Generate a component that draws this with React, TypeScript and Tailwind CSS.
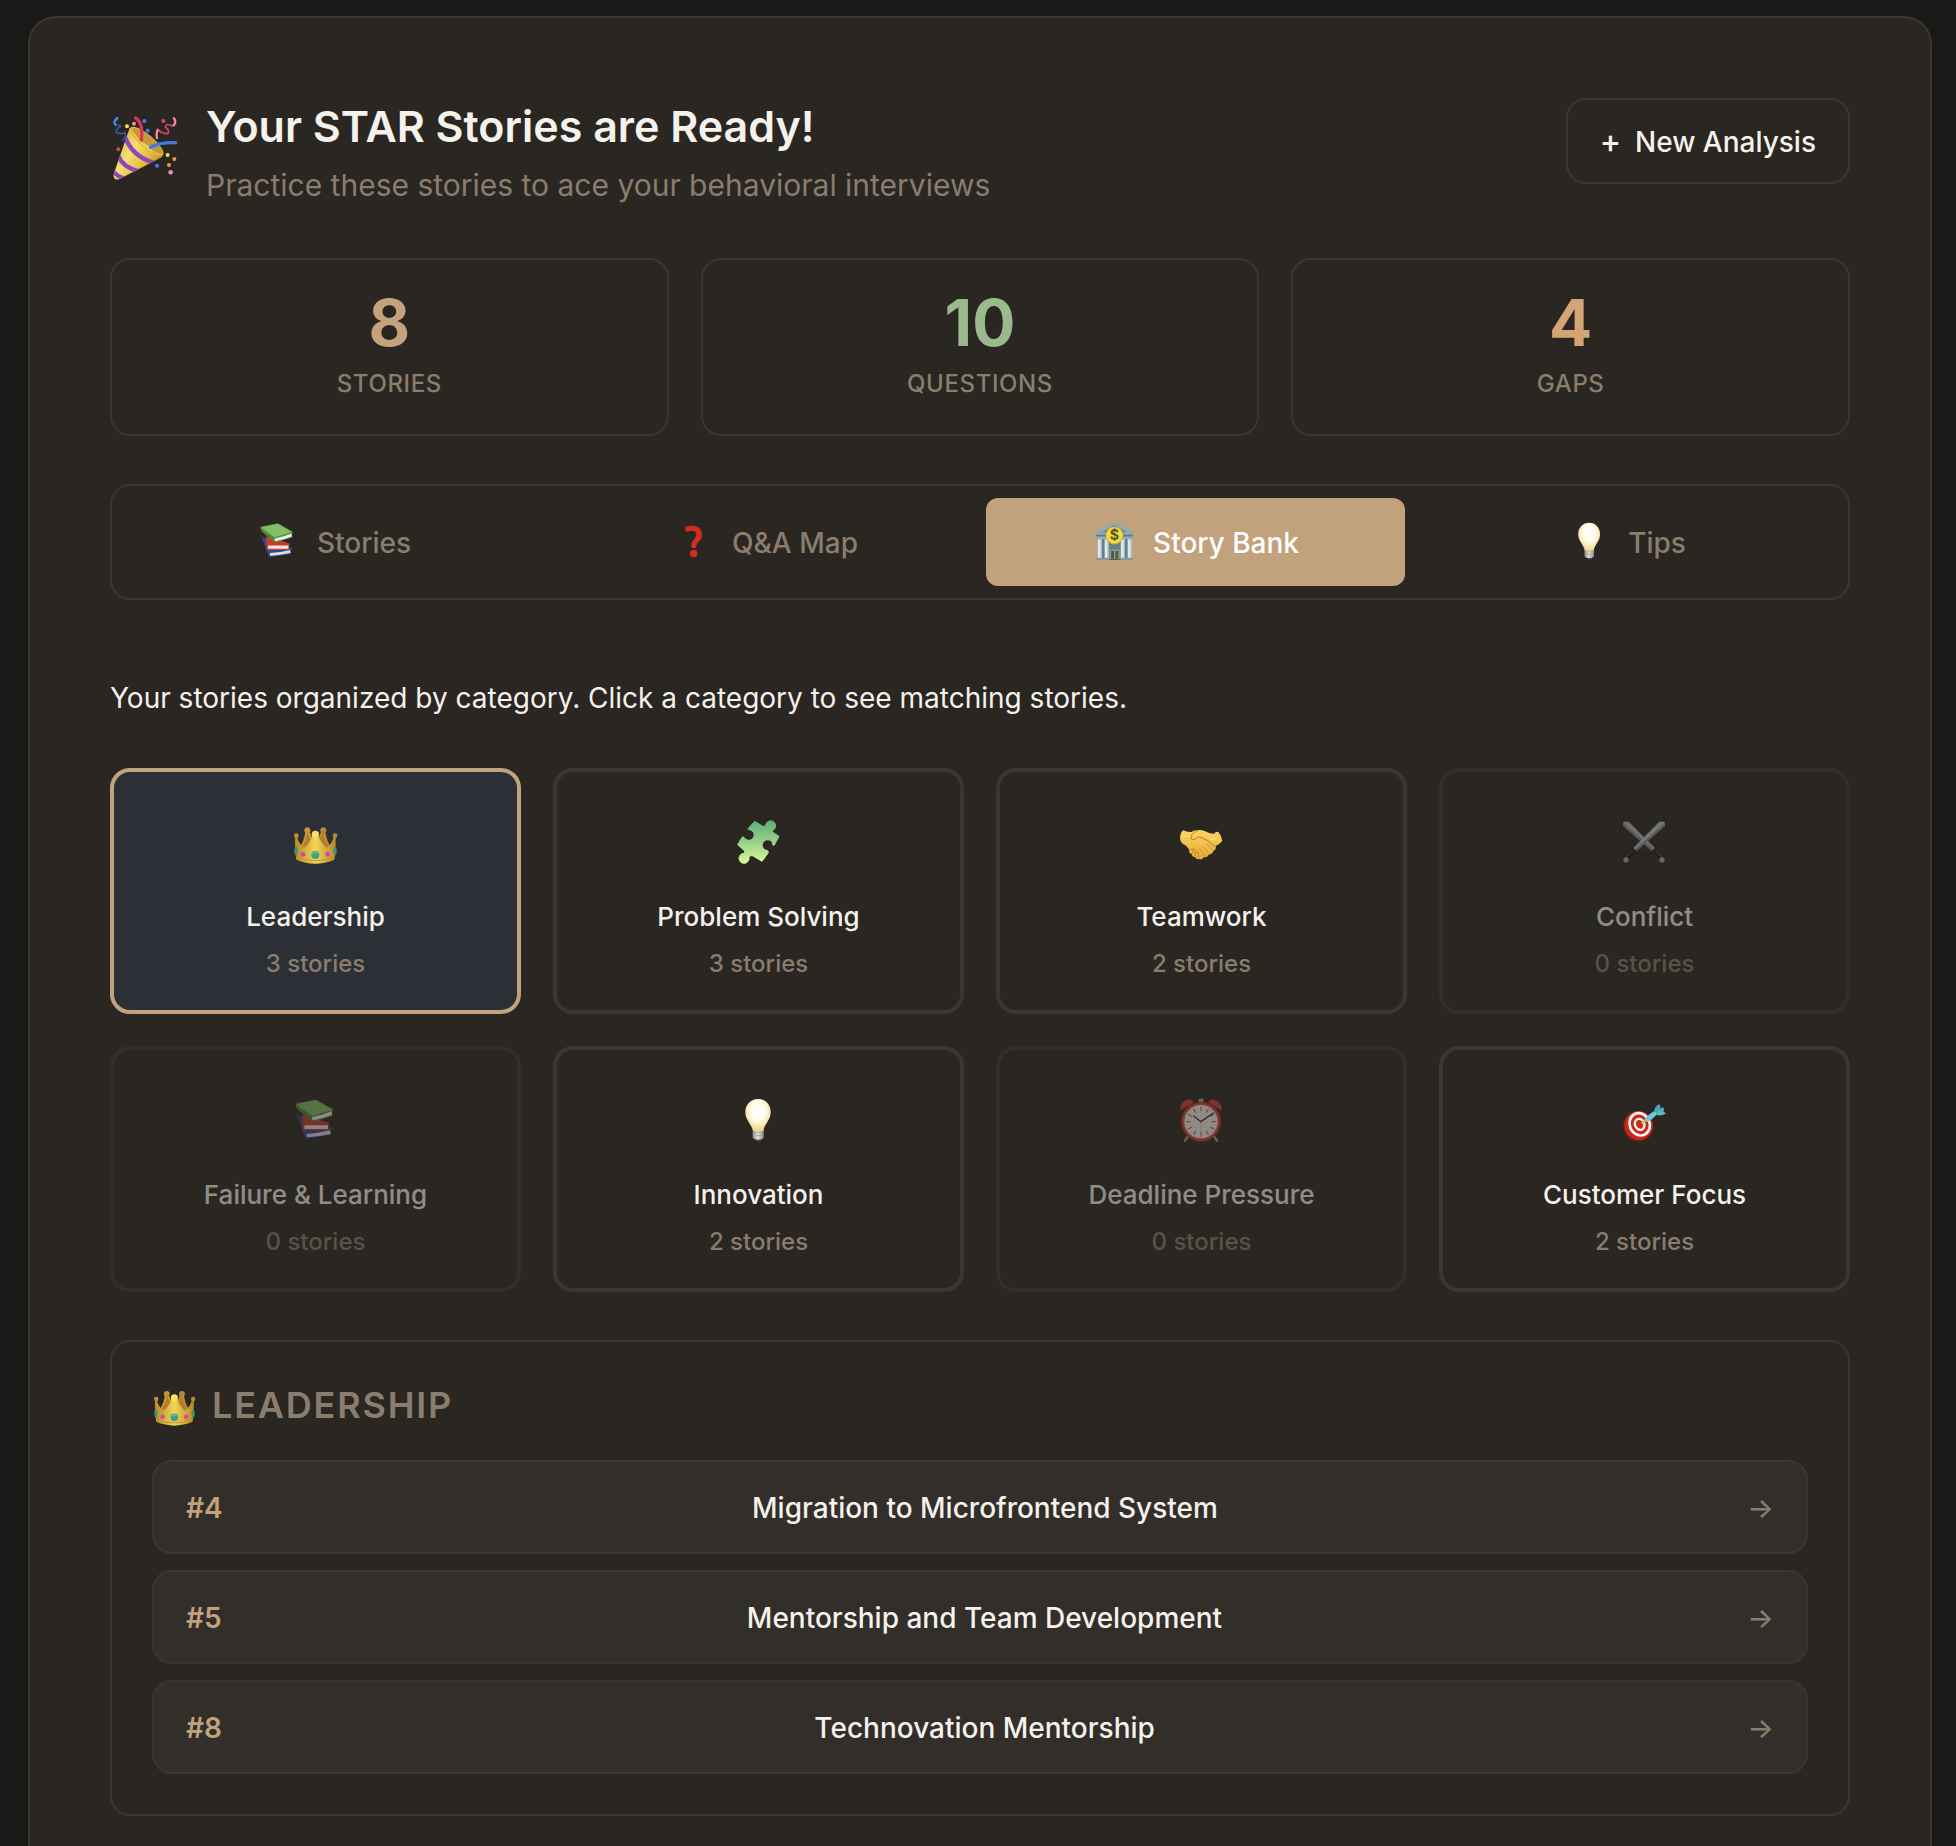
import React, { useState } from "react";
import clsx from "clsx";

type IconProps = { className?: string };

const PartyIcon = ({ className }: IconProps) => (
  <svg viewBox="30 45 204 204" className={className} aria-hidden="true">
    <defs>
      <linearGradient id="cone" x1="0" y1="0" x2="1" y2="0.7">
        <stop offset="0" stopColor="#c9992f" />
        <stop offset="0.45" stopColor="#f7e070" />
        <stop offset="0.75" stopColor="#e3b83c" />
        <stop offset="1" stopColor="#b3822a" />
      </linearGradient>
      <clipPath id="coneClip">
        <path d="M89 84 L41 222 Q38 241 57 238 L188 170 Q150 150 89 84Z" />
      </clipPath>
    </defs>
    <path d="M89 84 L41 222 Q38 241 57 238 L188 170 Q150 150 89 84Z" fill="url(#cone)" />
    <g clipPath="url(#coneClip)" fill="none" stroke="#8e45c4" strokeWidth="13">
      <path d="M74 108 Q96 172 168 190" />
      <path d="M54 166 Q70 204 118 214" />
      <path d="M36 210 Q50 230 76 236" />
    </g>
    <ellipse cx="140" cy="124" rx="64" ry="20" transform="rotate(40 140 124)" fill="#e0b544" />
    <ellipse cx="142" cy="122" rx="57" ry="14" transform="rotate(40 142 122)" fill="#c9973a" />
    <path d="M92 86 L122 124 L152 142 L160 158 Q120 140 92 86Z" fill="#ecd05a" />
    <path d="M124 120 Q130 68 107 54" fill="none" stroke="#d8345a" strokeWidth="10" strokeLinecap="round" />
    <path d="M152 142 Q176 127 227 128" fill="none" stroke="#3f78ea" strokeWidth="10" strokeLinecap="round" />
    <path d="M52 54 Q36 68 48 75 Q60 73 62 79 Q45 89 48 97 Q56 103 76 99 Q80 108 68 122" fill="none" stroke="#345fc4" strokeWidth="4" strokeLinecap="round" />
    <path d="M52 54 Q38 66 46 74" fill="none" stroke="#4a86f5" strokeWidth="7" strokeLinecap="round" />
    <path d="M222 55 Q232 73 216 78 Q200 68 196 80 Q212 96 202 101 Q184 100 173 88 Q168 96 171 114" fill="none" stroke="#d2486c" strokeWidth="5" strokeLinecap="round" />
    <path d="M222 55 Q230 68 221 76 M173 90 Q168 100 171 114" fill="none" stroke="#ef8aa8" strokeWidth="7" strokeLinecap="round" />
    <circle cx="81" cy="79" r="6" fill="#f6e04e" />
    <circle cx="102" cy="71" r="6" fill="#f08ab0" />
    <circle cx="133" cy="63" r="6" fill="#3f7ef0" />
    <circle cx="143" cy="92" r="6" fill="#3f7ef0" />
    <circle cx="190" cy="63" r="6" fill="#e0466c" />
    <circle cx="55" cy="148" r="6" fill="#d2435f" />
    <circle cx="203" cy="165" r="6" fill="#f4e150" />
    <circle cx="223" cy="177" r="6" fill="#ef9b3e" />
    <circle cx="207" cy="195" r="6" fill="#ef9b3e" />
    <circle cx="171" cy="197" r="6" fill="#3f7ef0" />
    <circle cx="212" cy="217" r="7" fill="#f08ab8" />
  </svg>
);

const CrownIcon = ({ className }: IconProps) => (
  <svg viewBox="2 0 132 132" className={className} aria-hidden="true">
    <defs>
      <linearGradient id="crownFront" x1="0" y1="0" x2="1" y2="0">
        <stop offset="0" stopColor="#b8862a" />
        <stop offset="0.5" stopColor="#f2d557" />
        <stop offset="1" stopColor="#b8862a" />
      </linearGradient>
    </defs>
    <path d="M14 92 Q32 66 36 34 H48 Q54 54 66 66 Q78 54 84 34 H96 Q100 66 118 92Z" fill="#b07f2b" />
    <path d="M20 82 Q36 66 40 36 M46 36 Q52 56 60 64" fill="none" stroke="#d0a23c" strokeWidth="4" />
    <path d="M112 82 Q96 66 92 36 M86 36 Q80 56 72 64" fill="none" stroke="#bf913a" strokeWidth="4" />
    <circle cx="42" cy="31" r="9" fill="#c4962c" />
    <circle cx="90" cy="31" r="9" fill="#b3893a" />
    <circle cx="9" cy="47" r="7" fill="#c4962c" />
    <circle cx="125" cy="47" r="7" fill="#b3893a" />
    <path d="M5 50 Q4 90 9 119 Q36 131 66 131 Q96 131 123 119 Q128 90 127 50 H121 Q116 72 100 83 Q86 76 75 48 H57 Q46 76 32 83 Q16 72 11 50Z" fill="url(#crownFront)" />
    <path d="M8 112 Q66 132 124 112" fill="none" stroke="#c7962c" strokeWidth="3" />
    <circle cx="66" cy="43" r="11" fill="#fbe45c" />
    <circle cx="66" cy="105" r="12" fill="#3fa37f" />
    <path d="M58 101 Q65 94 73 99" stroke="#7fd0ac" strokeWidth="3" fill="none" />
    <circle cx="29" cy="103" r="7" fill="#cf48ab" />
    <circle cx="103" cy="103" r="7" fill="#cf48ab" />
    <ellipse cx="8" cy="93" rx="5" ry="12" fill="#3a9673" />
    <ellipse cx="125" cy="93" rx="5" ry="12" fill="#3a9673" />
  </svg>
);

const BooksIcon = ({ className }: IconProps) => (
  <svg viewBox="0 0 132 132" className={className} aria-hidden="true">
    <path d="M8 48 L26 60 L34 92 L112 88 L116 92 L109 97 L110 111 L38 122 Q32 120 30 110Z" fill="#2c4798" />
    <path d="M38 108 Q72 106 108 97 L110 108 Q74 116 40 118 Q36 114 38 108Z" fill="#dedbd8" />
    <path d="M24 50 L105 74 L106 80 H30 L27 94Z" fill="#c93a2c" />
    <path d="M30 78 L105 77 L103 97 H27 Q22 88 30 78Z" fill="#c93a2c" />
    <path d="M32 82 H102 V93 H32 Q29 88 32 82Z" fill="#e8e4e0" />
    <path d="M5 20 Q4 16 12 15 L62 5 Q66 4 70 6 L117 34 Q120 37 115 39 L113 49 L118 53 L60 71 Q54 72 49 66 L10 34 Q5 28 5 20Z" fill="#4c8a34" />
    <path d="M7 19 L64 6 L116 35 L54 54Z" fill="#83bd68" />
    <path d="M55 57 Q84 52 113 40 L114 50 Q84 62 57 67 Q51 62 55 57Z" fill="#f1eeea" />
  </svg>
);

const QuestionIcon = ({ className }: IconProps) => (
  <svg viewBox="0 0 132 132" className={className} aria-hidden="true">
    <path d="M36 17 Q50 12 64 13 Q93 17 94 44 Q94 58 83 67 Q74 75 74 85 Q73 91 65 91 Q56 91 56 82 Q56 70 66 60 Q75 52 74 43 Q72 31 60 30 Q50 30 42 35 Q37 35 36 28Z" fill="#d32c20" />
    <circle cx="65" cy="109" r="13" fill="#d32c20" />
  </svg>
);

const BankIcon = ({ className }: IconProps) => (
  <svg viewBox="2 0 132 132" className={className} aria-hidden="true">
    <path d="M8 44 H124 V126 H8Z" fill="#66808a" />
    <path d="M66 0 L131 34 V44 H1 V34Z" fill="#8fa9b4" />
    <path d="M66 11 L110 36 H22Z" fill="#6c8590" />
    <path d="M2 44 H130 V50 H2Z" fill="#607985" />
    <path d="M4 50 H128 V60 H4Z" fill="#92abb5" />
    <path d="M8 60 H22 V126 H8Z M32 60 H46 V126 H32Z M88 60 H102 V126 H88Z M112 60 H126 V126 H112Z" fill="#dfe8ea" />
    <path d="M18 60 H22 V126 H18Z M42 60 H46 V126 H42Z M98 60 H102 V126 H98Z M122 60 H126 V126 H122Z" fill="#a6b9c0" />
    <path d="M50 96 H84 V128 H50Z" fill="#c8a53c" />
    <path d="M54 100 H65 V128 H54Z M69 100 H80 V128 H69Z" fill="#2f6089" />
    <path d="M2 124 H48 V132 H2Z M86 124 H130 V132 H86Z" fill="#8199a3" />
    <path d="M48 128 H86 V132 H48Z" fill="#6b5a3a" />
    <circle cx="66" cy="47" r="31" fill="#d3ad24" />
    <circle cx="66" cy="46" r="28" fill="#f2dc45" />
    <text x="66" y="64" textAnchor="middle" fontSize="50" fontWeight="700" fill="#5d5522">
      $
    </text>
  </svg>
);

const BulbIcon = ({ className }: IconProps) => (
  <svg viewBox="0 0 132 132" className={className} aria-hidden="true">
    <defs>
      <radialGradient id="bulbGlass" cx="0.5" cy="0.38" r="0.62">
        <stop offset="0" stopColor="#ffffff" />
        <stop offset="0.5" stopColor="#fffbe6" />
        <stop offset="1" stopColor="#eed27c" />
      </radialGradient>
      <linearGradient id="bulbBase" x1="0" y1="0" x2="1" y2="0">
        <stop offset="0" stopColor="#8f8d8a" />
        <stop offset="0.45" stopColor="#e4e2df" />
        <stop offset="1" stopColor="#8f8d8a" />
      </linearGradient>
    </defs>
    <path d="M52 118 H76 L71 130 Q64 133 57 130Z" fill="#46433f" />
    <path d="M47 95 H80 V118 Q78 125 64 125 Q49 125 47 118Z" fill="url(#bulbBase)" />
    <path d="M48 105 L80 102 M48 114 L80 111" stroke="#9b9894" strokeWidth="2" />
    <path d="M63 3 C85 3 101 20 101 42 C101 66 84 76 79 98 Q64 102 48 98 C42 76 25 66 25 42 C25 20 41 3 63 3Z" fill="url(#bulbGlass)" />
  </svg>
);

const PuzzleIcon = ({ className }: IconProps) => (
  <svg viewBox="0 0 132 132" className={className} aria-hidden="true">
    <defs>
      <linearGradient id="puzzle" x1="0" y1="0" x2="0" y2="1">
        <stop offset="0" stopColor="#5fae74" />
        <stop offset="0.5" stopColor="#98d08a" />
        <stop offset="1" stopColor="#d9fb98" />
      </linearGradient>
    </defs>
    <path
      d="M53 4 L78 19 Q86 21 87 12 A15 15 0 1 1 109 30 Q103 33 108 37 L126 49 L112 75 Q107 80 106 68 A16 16 0 1 0 88 91 Q95 92 94 98 L75 124 L50 109 Q40 103 36 113 A15 15 0 1 1 20 100 Q27 97 22 92 L2 74 L15 52 Q19 47 24 56 A16 16 0 1 0 38 29 Q31 30 34 25Z"
      fill="url(#puzzle)"
      stroke="url(#puzzle)"
      strokeWidth="3"
      strokeLinejoin="round"
    />
  </svg>
);

const HandshakeIcon = ({ className }: IconProps) => (
  <svg viewBox="2 0 132 132" className={className} aria-hidden="true">
    <defs>
      <linearGradient id="hands" x1="0" y1="0" x2="0" y2="1">
        <stop offset="0" stopColor="#fbd564" />
        <stop offset="1" stopColor="#e8aa35" />
      </linearGradient>
    </defs>
    <path
      d="M2 53 Q4 34 13 31 Q22 37 36 36 Q44 30 56 30 Q66 29 76 33 Q92 42 104 41 Q110 34 117 36 Q126 46 129 62 Q120 74 109 78 Q112 88 102 93 Q99 103 88 104 Q84 113 74 112 Q68 121 59 117 Q51 120 47 111 Q38 112 37 102 Q28 101 30 91 Q24 78 8 70 Q2 62 2 53Z"
      fill="url(#hands)"
    />
    <path d="M57 31 Q38 36 34 54 Q38 63 49 56 Q54 50 62 51 Q84 58 108 80" fill="none" stroke="#b97a20" strokeWidth="3" strokeLinecap="round" />
    <path d="M80 70 L101 90 M70 78 L88 99 M60 84 L74 108" fill="none" stroke="#cf9430" strokeWidth="3" strokeLinecap="round" />
    <path d="M31 91 Q36 84 43 88 Q40 96 37 102 M43 89 Q51 87 51 95 L46 108 M51 97 Q60 96 58 104 L56 114" fill="none" stroke="#c08226" strokeWidth="3" />
    <path d="M8 45 Q16 50 32 50 M112 52 Q104 60 94 58" fill="none" stroke="#fbe084" strokeWidth="4" strokeLinecap="round" />
  </svg>
);

const SwordsIcon = ({ className }: IconProps) => (
  <svg viewBox="2 0 132 132" className={className} aria-hidden="true">
    <path d="M3 5 H19 L98 84 L89 93 L3 18Z" fill="#a9bdc7" />
    <path d="M3 9 V18 L89 93 L94 88Z" fill="#97838a" />
    <path d="M92 90 L116 116" stroke="#101317" strokeWidth="9" />
    <path d="M95 89 L118 113" stroke="#5b6067" strokeWidth="3" />
    <path d="M70 105 Q84 103 91 94 Q103 88 103 72" fill="none" stroke="#1c2025" strokeWidth="4" strokeLinecap="round" />
    <circle cx="119" cy="120" r="8" fill="#a8a2aa" />
    <path d="M127 5 H111 L33 84 L42 93 L127 18Z" fill="#b4c8d2" />
    <path d="M127 10 V18 L42 93 L38 88Z" fill="#97838a" />
    <path d="M38 90 L14 116" stroke="#101317" strokeWidth="9" />
    <path d="M36 89 L12 113" stroke="#5b6067" strokeWidth="3" />
    <path d="M60 105 Q46 103 39 94 Q27 88 27 72" fill="none" stroke="#1c2025" strokeWidth="4" strokeLinecap="round" />
    <circle cx="11" cy="120" r="8" fill="#a8a2aa" />
  </svg>
);

const TICKS = [0, 30, 60, 90, 120, 150, 180, 210, 240, 270, 300, 330];

const ClockIcon = ({ className }: IconProps) => (
  <svg viewBox="0 0 132 132" className={className} aria-hidden="true">
    <path d="M26 112 L15 128 M100 112 L111 128" stroke="#a3a3a6" strokeWidth="7" strokeLinecap="round" />
    <path d="M56 2 H70 V12 H56Z" fill="#a3a3a6" />
    <path d="M1 38 Q-2 14 20 6 Q34 2 42 12Z" fill="#cf4038" />
    <path d="M125 38 Q128 14 106 6 Q92 2 84 12Z" fill="#cf4038" />
    <circle cx="63" cy="71" r="60" fill="#b9302c" />
    <circle cx="63" cy="71" r="55" fill="#d6524a" />
    <circle cx="63" cy="71" r="50" fill="#f1efec" />
    {TICKS.map((deg) => (
      <path key={deg} d="M63 26 V39" transform={`rotate(${deg} 63 71)`} stroke="#d0392f" strokeWidth="3" />
    ))}
    <path d="M63 71 V118" stroke="#cfc79a" strokeWidth="3" />
    <path d="M41 54 L63 71 L100 45" fill="none" stroke="#2c2b2b" strokeWidth="4" strokeLinecap="round" />
  </svg>
);

const TargetIcon = ({ className }: IconProps) => (
  <svg viewBox="0 0 132 132" className={className} aria-hidden="true">
    <ellipse cx="46" cy="85" rx="45" ry="45" fill="#8f1b16" />
    <ellipse cx="47" cy="82" rx="42" ry="43" transform="rotate(-25 47 82)" fill="#c42c22" />
    <g fill="none" transform="rotate(-25 50 79)">
      <ellipse cx="50" cy="79" rx="30" ry="34" stroke="#f7f3f0" strokeWidth="8" />
      <ellipse cx="50" cy="79" rx="14" ry="17" stroke="#f7f3f0" strokeWidth="7" />
    </g>
    <path d="M56 77 L68 66" stroke="#d9b92e" strokeWidth="7" />
    <path d="M64 66 Q70 52 96 38 L104 46 Q90 64 71 73Z" fill="#6cc7d8" />
    <path d="M92 42 Q94 26 109 18 L114 29 L103 43Z" fill="#4ea3b6" />
    <path d="M100 50 L104 39 L120 28 L124 34 Q116 40 130 46 Q116 56 100 50Z" fill="#5fb4c6" />
  </svg>
);

const stats = [
  { value: 8, label: "Stories", color: "text-[#c4a27c]" },
  { value: 10, label: "Questions", color: "text-[#9aba8e]" },
  { value: 4, label: "Gaps", color: "text-[#d4a574]" },
];

const tabs = [
  { name: "Stories", Icon: BooksIcon },
  { name: "Q&A Map", Icon: QuestionIcon },
  { name: "Story Bank", Icon: BankIcon },
  { name: "Tips", Icon: BulbIcon },
];

const categories = [
  { name: "Leadership", count: 3, Icon: CrownIcon },
  { name: "Problem Solving", count: 3, Icon: PuzzleIcon },
  { name: "Teamwork", count: 2, Icon: HandshakeIcon },
  { name: "Conflict", count: 0, Icon: SwordsIcon },
  { name: "Failure & Learning", count: 0, Icon: BooksIcon },
  { name: "Innovation", count: 2, Icon: BulbIcon },
  { name: "Deadline Pressure", count: 0, Icon: ClockIcon },
  { name: "Customer Focus", count: 2, Icon: TargetIcon },
];

const stories = [
  { id: 4, title: "Migration to Microfrontend System" },
  { id: 5, title: "Mentorship and Team Development" },
  { id: 8, title: "Technovation Mentorship" },
];

const Header = () => (
  <header className="mb-[50px] flex items-start justify-between">
    <div className="flex items-start gap-7">
      <div className="pt-[17px]">
        <PartyIcon className="size-[68px]" />
      </div>
      <div>
        <h1 className="text-[43px] leading-14 font-semibold">Your STAR Stories are Ready!</h1>
        <p className="mt-2 text-[30px] leading-[46px] text-[#8a7d6d]">
          Practice these stories to ace your behavioral interviews
        </p>
      </div>
    </div>
    <button
      type="button"
      className="flex items-center gap-3.5 rounded-[20px] border-2 border-[#3a3632] px-8 pt-5 pb-[18px] text-[28px] leading-11 font-medium"
    >
      <span className="text-[32px]">+</span>
      <span>New Analysis</span>
    </button>
  </header>
);

const Stats = () => (
  <div className="mb-12 grid grid-cols-3 gap-8">
    {stats.map((stat) => (
      <div key={stat.label} className="rounded-[20px] border-2 border-[#3a3632] py-8 text-center">
        <div className={clsx("text-[64px] leading-[62px] font-bold", stat.color)}>{stat.value}</div>
        <div className="mt-3 text-2xl leading-9 font-medium tracking-wide text-[#8a7d6d] uppercase">
          {stat.label}
        </div>
      </div>
    ))}
  </div>
);

const App = () => {
  const [tab, setTab] = useState("Story Bank");
  const [category, setCategory] = useState("Leadership");

  return (
    <div className="min-h-screen bg-[#1a1917] pt-4 pr-6 pl-7 font-[Inter,sans-serif] text-[#f5f1eb]">
      <main className="rounded-[28px] border-2 border-[#3a3632] bg-[#2a2622] p-20">
        <Header />
        <Stats />

        {/* Tabs */}
        <nav className="grid grid-cols-4 gap-3 rounded-[20px] border-2 border-[#3a3632] p-3">
          {tabs.map(({ name, Icon }) => (
            <button
              key={name}
              type="button"
              onClick={() => setTab(name)}
              className={clsx(
                "flex items-center justify-center gap-4 rounded-xl pt-6 pb-[22px] text-[28px] leading-[42px] font-medium",
                tab === name ? "bg-[#c2a27c] text-white" : "text-[#8a7d6d]",
              )}
            >
              <span className="flex w-[45px] justify-center pb-1">
                <Icon className="size-[38px]" />
              </span>
              {name}
            </button>
          ))}
        </nav>

        <p className="mt-19 mb-12 text-[28px] leading-11">
          Your stories organized by category. Click a category to see matching stories.
        </p>

        {/* Categories */}
        <div className="grid grid-cols-4 gap-8">
          {categories.map(({ name, count, Icon }) => (
            <button
              key={name}
              type="button"
              disabled={count === 0}
              onClick={() => setCategory(name)}
              className={clsx(
                "flex flex-col items-center rounded-[20px] border-4 pt-12 pb-[30px]",
                category === name ? "border-[#c2a27c] bg-[#2d2f36]" : "border-[#3a3632]",
                count === 0 && "opacity-50",
              )}
            >
              <Icon className="size-11" />
              <span className="mt-8 text-[26px] leading-[42px] font-medium">{name}</span>
              <span className="mt-2.5 text-2xl leading-8 font-medium text-[#8a7d6d]">{count} stories</span>
            </button>
          ))}
        </div>

        {/* Stories of the selected category */}
        <section className="mt-12 rounded-[20px] border-2 border-[#3a3632] p-10">
          <h2 className="mb-8 flex items-center gap-4 px-0.5 text-4xl leading-[46px] font-semibold tracking-wider text-[#8a7d6d] uppercase">
            <CrownIcon className="size-[42px]" />
            {category}
          </h2>
          <div className="flex flex-col gap-4">
            {stories.map((story) => (
              <button
                key={story.id}
                type="button"
                className="flex items-center rounded-[20px] border-2 border-[#3a3632] bg-[#322e2a] px-8 pt-6 pb-[22px] text-[28px] leading-11 font-medium"
              >
                <span className="font-semibold text-[#c2a27c]">#{story.id}</span>
                <span className="flex-1 text-center">{story.title}</span>
                <span className="text-[#8a7d6d]">→</span>
              </button>
            ))}
          </div>
        </section>
      </main>
    </div>
  );
};

export default App;
